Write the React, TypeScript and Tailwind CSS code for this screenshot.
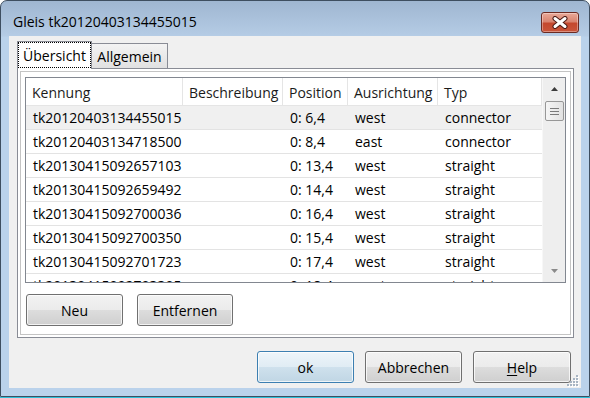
import React from 'react'

const rows = [
  ['tk20120403134455015', '', '0: 6,4', 'west', 'connector'],
  ['tk20120403134718500', '', '0: 8,4', 'east', 'connector'],
  ['tk20130415092657103', '', '0: 13,4', 'west', 'straight'],
  ['tk20130415092659492', '', '0: 14,4', 'west', 'straight'],
  ['tk20130415092700036', '', '0: 16,4', 'west', 'straight'],
  ['tk20130415092700350', '', '0: 15,4', 'west', 'straight'],
  ['tk20130415092701723', '', '0: 17,4', 'west', 'straight'],
  ['tk20130415092703305', '', '0: 18,4', 'west', 'straight'],
]

const headers = ['Kennung', 'Beschreibung', 'Position', 'Ausrichtung', 'Typ']
const colW = ['w-[157px]', 'w-[100px]', 'w-[65px]', 'w-[90px]', 'w-[104px]']

function Button({
  children,
  primary = false,
  className = '',
}: {
  children: React.ReactNode
  primary?: boolean
  className?: string
}) {
  return (
    <div
      className={`h-[32px] flex items-center justify-center rounded-[3px] border text-[14px] text-black shadow-[inset_0_0_0_1px_rgba(255,255,255,0.75)] ${
        primary
          ? 'border-[#3c7fb1] bg-[linear-gradient(to_bottom,#edf5fa_0%,#e0ecf4_50%,#cfe1ed_50%,#c0d6e4_100%)]'
          : 'border-[#707070] bg-[linear-gradient(to_bottom,#f2f2f2_0%,#ebebeb_50%,#dddddd_50%,#cfcfcf_100%)]'
      } ${className}`}
    >
      {children}
    </div>
  )
}

function CloseButton() {
  return (
    <div className="mt-[11px] mr-[10px] w-[38px] h-[21px] rounded-[3px] border border-[#6b2a22] bg-[linear-gradient(to_bottom,#e9a999_0%,#d98470_45%,#c4482e_55%,#c9553b_100%)] shadow-[inset_0_0_0_1px_rgba(255,255,255,0.35)] flex items-center justify-center">
      <svg width="16" height="13" viewBox="0 0 16 13">
        <path d="M3 2.5 L13 10.5 M13 2.5 L3 10.5" stroke="#4a1a14" strokeWidth="5" strokeLinecap="round" />
        <path d="M3 2.5 L13 10.5 M13 2.5 L3 10.5" stroke="#ffffff" strokeWidth="3" strokeLinecap="round" />
      </svg>
    </div>
  )
}

function Scrollbar() {
  return (
    <div className="w-[23px] bg-[#eeeeee] border-l border-[#f7f7f7] flex flex-col items-center">
      <div className="h-[22px] w-full flex items-center justify-center">
        <svg width="7" height="4" viewBox="0 0 7 4">
          <path d="M3.5 0 L7 4 L0 4 Z" fill="#3c3c3c" />
        </svg>
      </div>
      <div className="mt-[1px] w-[19px] h-[20px] rounded-[2px] border border-[#979797] bg-[linear-gradient(to_right,#f5f5f5,#e2e2e2)] flex flex-col items-center justify-center gap-[2px]">
        <div className="w-[9px] h-px bg-[#7a7a7a]" />
        <div className="w-[9px] h-px bg-[#7a7a7a]" />
        <div className="w-[9px] h-px bg-[#7a7a7a]" />
      </div>
      <div className="flex-1" />
      <div className="h-[22px] w-full flex items-center justify-center">
        <svg width="7" height="4" viewBox="0 0 7 4">
          <path d="M0 0 L7 0 L3.5 4 Z" fill="#8a8a8a" />
        </svg>
      </div>
    </div>
  )
}

function Grip() {
  const dots = [
    [9, 0], [9, 3], [6, 3], [9, 6], [6, 6], [3, 6], [9, 9], [6, 9], [3, 9], [0, 9],
  ]
  return (
    <svg width="12" height="12" viewBox="0 0 12 12" className="absolute right-[2px] bottom-[1px]">
      {dots.map(([x, y]) => (
        <g key={`${x}-${y}`}>
          <rect x={x + 1} y={y + 1} width="2" height="2" fill="#ffffff" />
          <rect x={x} y={y} width="2" height="2" fill="#a7b4c2" />
        </g>
      ))}
    </svg>
  )
}

export default function App() {
  return (
    <div className="w-[590px] h-[398px] bg-white font-['Open_Sans',sans-serif]">
      <div className="h-[397px] rounded-t-[7px] border border-[#3e4e60] bg-[linear-gradient(to_bottom,#9fb6d1_0px,#b5cce5_35px,#bad2eb_36px,#bad2eb_100%)] flex flex-col">
        {/* title bar */}
        <div className="h-[35px] shrink-0 flex items-start">
          <div className="flex-1 pl-[12px] pt-[12px] text-[14px] leading-[18px] text-black">
            Gleis tk20120403134455015
          </div>
          <CloseButton />
        </div>

        {/* client area */}
        <div className="relative flex-1 mx-[8px] mb-[8px] bg-[#f0f0f0] flex flex-col">
          <div className="pt-[5px] pl-[8px] flex items-end text-[14px] text-black">
            <div className="relative z-10 -mb-px w-[75px] h-[28px] border-l border-t border-r border-[#898c95] bg-white flex items-center justify-center pb-[1px]">
              <div className="absolute left-0 right-0 top-0 bottom-[1px] border border-dotted border-black" />
              Übersicht
            </div>
            <div className="w-[76px] h-[25px] border-t border-r border-[#898c95] bg-[linear-gradient(to_bottom,#f3f3f3,#e1e1e1)] flex items-center justify-center">
              Allgemein
            </div>
          </div>

          {/* tab pane */}
          <div className="ml-[8px] mr-[7px] h-[270px] border border-[#898c95] bg-white p-[2px] flex">
            <div className="flex-1 border border-[#c4c4c4] flex flex-col">
              <div className="mt-[5px] ml-[4px] mr-[4px] h-[206px] border border-[#828790] flex overflow-hidden">
                <div className="w-[516px] flex flex-col overflow-hidden text-[14px] text-black">
                  <div className="h-[28px] shrink-0 flex border-b border-[#e5e5e5] bg-white text-[#1b1b1b]">
                    {headers.map((h, i) => (
                      <div key={h} className={`${colW[i]} shrink-0 pl-[6px] pt-[1px] flex items-center border-r border-[#e5e5e5] whitespace-nowrap`}>
                        {h}
                      </div>
                    ))}
                  </div>
                  {rows.map((r, ri) => (
                    <div key={r[0]} className={`h-[24px] shrink-0 flex border-b border-[#e3e3e3] ${ri === 0 ? 'bg-[#f0f0f0]' : 'bg-white'}`}>
                      {r.map((c, ci) => (
                        <div key={ci} className={`${colW[ci]} shrink-0 flex items-center whitespace-nowrap ${ci === 0 ? 'pl-[7px]' : 'pl-[7px]'}`}>
                          {c}
                        </div>
                      ))}
                    </div>
                  ))}
                </div>
                <Scrollbar />
              </div>

              <div className="mt-[11px] ml-[5px] flex gap-[14px]">
                <Button className="w-[97px]">Neu</Button>
                <Button className="w-[96px]">Entfernen</Button>
              </div>
            </div>
          </div>

          {/* dialog buttons */}
          <div className="mt-[13px] mr-[10px] flex justify-end gap-[11px]">
            <Button primary className="w-[97px]">ok</Button>
            <Button className="w-[97px]">Abbrechen</Button>
            <Button className="w-[98px]">
              <span>
                <span className="underline underline-offset-[2px]">H</span>elp
              </span>
            </Button>
          </div>

          <Grip />
        </div>
      </div>
      <div className="h-px bg-[#2dbfd8]" />
    </div>
  )
}
